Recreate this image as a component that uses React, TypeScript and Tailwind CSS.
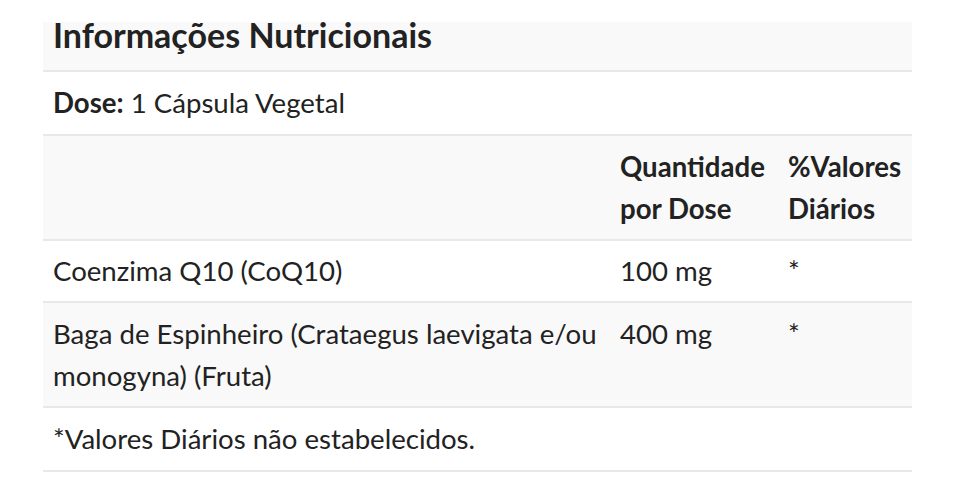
export default function App() {
  const font = { fontFamily: "Lato, 'Noto Sans', sans-serif" };
  return (
    <div className="w-[955px] h-[494px] bg-white" style={font}>
      <div className="pt-[22px] pl-[43px] w-[912px]">
        <table className="w-[869px] border-collapse text-[#222] text-[27.6px] leading-[42px]">
          <colgroup>
            <col className="w-[567px]" />
            <col className="w-[168px]" />
            <col className="w-[134px]" />
          </colgroup>
          <tbody>
            <tr className="bg-[#f9f9f9] border-b-2 border-[#e8e8e8]">
              <td colSpan={3} className="px-[10px] pt-0 pb-[22px] h-[48px] text-[34px] font-bold leading-[26px] align-top">
                Informações Nutricionais
              </td>
            </tr>
            <tr className="border-b-2 border-[#e8e8e8]">
              <td colSpan={3} className="px-[10px] py-[10px]">
                <b>Dose:</b> 1 Cápsula Vegetal
              </td>
            </tr>
            <tr className="bg-[#f9f9f9] border-b-2 border-[#e8e8e8] font-bold align-top">
              <td className="px-[10px] pt-[10px] pb-[9px]"></td>
              <td className="px-[10px] pt-[10px] pb-[9px]">Quantidade por Dose</td>
              <td className="px-[10px] pt-[10px] pb-[9px]">%Valores Diários</td>
            </tr>
            <tr className="border-b-2 border-[#e8e8e8] align-top">
              <td className="px-[10px] py-[9px]">Coenzima Q10 (CoQ10)</td>
              <td className="px-[10px] py-[9px]">100 mg</td>
              <td className="px-[10px] py-[9px]">*</td>
            </tr>
            <tr className="bg-[#f9f9f9] border-b-2 border-[#e8e8e8] align-top">
              <td className="px-[10px] pt-[10px] pb-[9px]">Baga de Espinheiro (Crataegus laevigata e/ou monogyna) (Fruta)</td>
              <td className="px-[10px] pt-[10px] pb-[9px]">400 mg</td>
              <td className="px-[10px] pt-[10px] pb-[9px]">*</td>
            </tr>
            <tr className="border-b-2 border-[#e8e8e8]">
              <td colSpan={3} className="px-[10px] py-[10px]">*Valores Diários não estabelecidos.</td>
            </tr>
          </tbody>
        </table>
      </div>
    </div>
  );
}
